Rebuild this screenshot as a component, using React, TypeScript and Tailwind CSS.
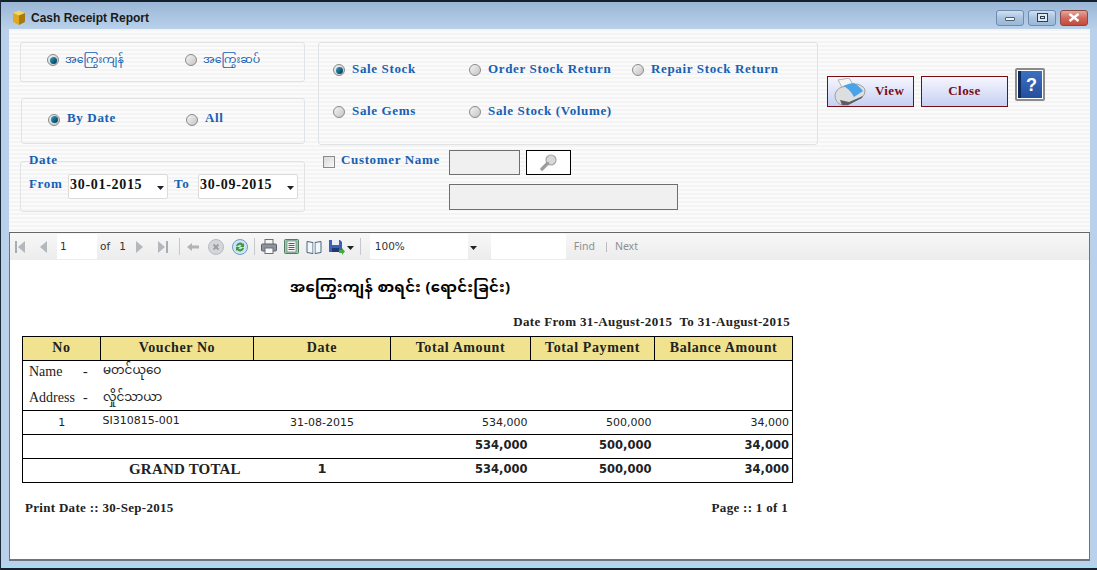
import { ReactNode } from "react";

const serif = "font-['Liberation_Serif',serif]";
const blueLabel = `${serif} font-bold text-[13px] tracking-[0.65px] text-[#1560b5] whitespace-nowrap`;
const burmese = "font-['Noto_Sans_Myanmar','Padauk','Myanmar_Text','Noto_Sans',sans-serif]";
const burmeseLabel = `${burmese} text-[11px] text-[#1560b5]`;

function Radio({ checked, label, className = "" }: { checked?: boolean; label: ReactNode; className?: string }) {
  return (
    <div className={`flex items-center gap-[7px] ${className}`}>
      <span className="flex h-3 w-3 shrink-0 items-center justify-center rounded-full border border-[#8a8a8a] bg-gradient-to-br from-[#f4f4f4] to-[#c4c4c4]">
        {checked && <span className="h-[7px] w-[7px] rounded-full bg-gradient-to-br from-[#35a3cf] to-[#04344f]" />}
      </span>
      {label}
    </div>
  );
}

function Group({ className, children }: { className: string; children: ReactNode }) {
  return <div className={`rounded-[3px] border border-[#dfe3e6] ${className}`}>{children}</div>;
}

function DatePick({ value }: { value: string }) {
  return (
    <div className="flex h-[25px] w-[100px] items-center justify-between rounded-[2px] border border-[#dcdcdc] bg-white pl-[1px] pr-[3px]">
      <span className={`${serif} pb-[3px] text-[14px] font-bold tracking-[0.7px] text-[#111]`}>{value}</span>
      <Caret />
    </div>
  );
}

function Caret({ color = "#222" }: { color?: string }) {
  return (
    <svg width="7" height="4" viewBox="0 0 7 4" className="mt-[3px] shrink-0">
      <path d="M0 0h7L3.5 4z" fill={color} />
    </svg>
  );
}

function CaptionButton({ kind }: { kind: "min" | "max" | "close" }) {
  const skin =
    kind === "close"
      ? "w-[28px] border-[#8b4a45] from-[#e3a79d] via-[#cf6a5c] to-[#c4493a]"
      : "w-[28px] border-[#6d8cae] from-[#cfe0f1] via-[#a9c3de] to-[#9ab8d8]";
  return (
    <div className={`flex h-[16px] items-center justify-center rounded-[3px] border bg-gradient-to-b ${skin}`}>
      {kind === "min" && <span className="mt-[3px] h-[4px] w-[10px] rounded-[1px] border border-[#4f5f70] bg-[#eef3f8]" />}
      {kind === "max" && (
        <span className="flex h-[9px] w-[11px] items-center justify-center border border-[#2f3f50] bg-[#dfe9f3]">
          <span className="h-[3px] w-[5px] border border-[#2f3f50]" />
        </span>
      )}
      {kind === "close" && (
        <svg width="12" height="9" viewBox="0 0 12 9">
          <path d="M1.5 1l9 7M10.5 1l-9 7" stroke="#fff" strokeWidth="2.4" />
        </svg>
      )}
    </div>
  );
}

function CubeIcon() {
  return (
    <svg width="14" height="15" viewBox="0 0 14 15">
      <path d="M1 3l6-2.5L13 3 7 5.5z" fill="#f7d65a" />
      <path d="M1 3l6 2.5V15l-5-2.5Q1 12 1 11z" fill="#e0a81c" />
      <path d="M13 3L7 5.5V15l5-2.5q1-.5 1-1.5z" fill="#a9780f" />
    </svg>
  );
}

function PrinterBig() {
  return (
    <svg width="32" height="28" viewBox="0 0 32 28">
      <path d="M4 2l11-2 5 8-11 3z" fill="#f4f4f4" stroke="#a5a5a5" strokeWidth=".8" />
      <path d="M1 17Q2 11 8 9l15-3q8 2 8 7 0 4-3 6L14 27H8Q1 25 1 17z" fill="#dcdee0" stroke="#8f8f8f" strokeWidth=".8" />
      <path d="M9 8q7-3 11-3 3 1 9 8l-9 6q-4-8-11-11z" fill="#4aa3e6" />
      <path d="M6 22l9 2 14-6-1 2-14 7H8z" fill="#5b5e62" />
    </svg>
  );
}

function HelpButton() {
  return (
    <div className="flex h-[33px] w-[30px] items-stretch rounded-[2px] border-2 border-[#8a8a8a] bg-white p-[1px]">
      <span className="w-[3px] bg-[#0e2a5c]" />
      <span className="flex flex-1 items-center justify-center bg-gradient-to-b from-[#3d6fc0] to-[#23509f] font-['Liberation_Sans',sans-serif] text-[18px] font-bold leading-none text-white">
        ?
      </span>
    </div>
  );
}

function Lens() {
  return (
    <svg width="17" height="17" viewBox="0 0 17 17">
      <circle cx="11" cy="6" r="5" fill="#d8d8d8" stroke="#a5a5a5" strokeWidth="1.2" />
      <path d="M7.5 9.5L2 15" stroke="#9d9d9d" strokeWidth="3.4" strokeLinecap="round" />
    </svg>
  );
}

function NavArrow({ dir, stop }: { dir: "left" | "right"; stop?: boolean }) {
  return (
    <svg width="11" height="14" viewBox="0 0 11 14">
      {dir === "left" ? (
        <>
          {stop && <rect x="0" y="1" width="2" height="12" fill="#a8adb3" />}
          <path d="M10 1v12L3 7z" fill="#b4b8bd" />
        </>
      ) : (
        <>
          <path d="M1 1v12l7-6z" fill="#b4b8bd" />
          {stop && <rect x="9" y="1" width="2" height="12" fill="#a8adb3" />}
        </>
      )}
    </svg>
  );
}

function ToolSep() {
  return <span className="block h-[17px] w-px shrink-0 bg-[#c4c8cc]" />;
}

function ReportToolbar() {
  return (
    <div className="flex h-[28px] items-center border-x border-t border-x-[#6c7480] border-t-[#666] bg-gradient-to-b from-[#f7f7f7] to-[#ececec] pl-[4px] font-['DejaVu_Sans',sans-serif] text-[10.5px] text-[#333]">
      <span className="ml-[1px]"><NavArrow dir="left" stop /></span>
      <span className="ml-[11px]"><NavArrow dir="left" /></span>
      <span className="ml-[9px] flex h-[25px] w-[40px] items-center bg-white pl-[3px]">1</span>
      <span className="ml-[3px]">of</span>
      <span className="ml-[9px]">1</span>
      <span className="ml-[9px]"><NavArrow dir="right" /></span>
      <span className="ml-[11px]"><NavArrow dir="right" stop /></span>
      <span className="ml-[11px]"><ToolSep /></span>
      <svg width="12" height="10" viewBox="0 0 12 10" className="ml-[7px]">
        <path d="M0 5l5-4v2.500h7v3H5V9z" fill="#b0b4b8" />
      </svg>
      <svg width="16" height="16" viewBox="0 0 16 16" className="ml-[9px]">
        <circle cx="8" cy="8" r="7.500" fill="#d4d6d9" stroke="#b8babd" />
        <path d="M5.500 5.500l5 5M10.500 5.500l-5 5" stroke="#9a9da1" strokeWidth="1.800" />
      </svg>
      <svg width="16" height="16" viewBox="0 0 16 16" className="ml-[8px]">
        <circle cx="8" cy="8" r="7.500" fill="#cfe3f5" stroke="#6d9cc6" />
        <path d="M4 7a4 4 0 0 1 7-2l1-1v4H8l1.500-1.500A2.500 2.500 0 0 0 5.500 7.500z" fill="#3f9a3a" />
        <path d="M12 9a4 4 0 0 1-7 2l-1 1V8h4L6.500 9.500a2.500 2.500 0 0 0 4-1z" fill="#3f9a3a" />
      </svg>
      <span className="ml-[6px]"><ToolSep /></span>
      <svg width="16" height="15" viewBox="0 0 16 15" className="ml-[6px]">
        <rect x="4" y="0.500" width="8" height="5" fill="#f4f4f4" stroke="#6a6f75" />
        <rect x="0.500" y="5" width="15" height="7" rx="1" fill="#8d949b" stroke="#5c6268" />
        <rect x="4" y="9" width="8" height="5.500" fill="#fafafa" stroke="#6a6f75" />
      </svg>
      <svg width="15" height="15" viewBox="0 0 15 15" className="ml-[7px]">
        <rect x="0.500" y="0.500" width="14" height="14" rx="1" fill="#9fc9a8" stroke="#4d7d63" />
        <rect x="3" y="2" width="9" height="11" fill="#f6f6f6" stroke="#5b6b78" strokeWidth=".6" />
        <path d="M4.500 4.500h6M4.500 6.500h6M4.500 8.500h6M4.500 10.500h6" stroke="#46637a" />
      </svg>
      <svg width="16" height="14" viewBox="0 0 16 14" className="ml-[7px]">
        <path d="M1 1.500l6 1v11l-6-1zM15 1.500l-6 1v11l6-1z" fill="#f3f7fb" stroke="#4d6278" />
        <path d="M7 2.500h2v11H7z" fill="#c9d6e3" />
      </svg>
      <svg width="16" height="16" viewBox="0 0 16 16" className="ml-[7px]">
        <path d="M0 1h11l2 2v10H0z" fill="#3d5fb5" />
        <rect x="3" y="1" width="7" height="5" fill="#e9eef7" />
        <rect x="3" y="9" width="7" height="4" fill="#20386f" />
        <path d="M10 11h3V9l3 3.500-3 3.500v-2h-3z" fill="#3fae3f" />
      </svg>
      <span className="ml-[2px]"><Caret /></span>
      <span className="ml-[6px]"><ToolSep /></span>
      <div className="ml-[9px] flex h-[25px] w-[98px] items-center bg-white pl-[5px]">100%</div>
      <div className="flex h-[25px] w-[12px] items-center justify-center">
        <Caret />
      </div>
      <div className="ml-[11px] h-[25px] w-[75px] bg-white" />
      <span className="ml-[8px] font-['Noto_Sans',sans-serif] text-[#8a8f94]">Find</span>
      <span className="ml-[11px] h-[10px] w-px bg-[#b9bcc0]" />
      <span className="ml-[8px] font-['Noto_Sans',sans-serif] text-[#8a8f94]">Next</span>
    </div>
  );
}

const thClass = `border-r border-black pb-[2px] font-bold text-[14px] tracking-[0.6px] ${serif} text-[#222]`;
const sans = "font-['DejaVu_Sans',sans-serif]";

function TotalsCells({ lift }: { lift?: boolean }) {
  const cell = `${lift ? "pb-[3px] leading-[16px]" : ""} pr-[3px] text-right text-[11.5px] font-bold ${sans}`;
  return (
    <>
      <td className={cell}>534,000</td>
      <td className={cell}>500,000</td>
      <td className={cell}>34,000</td>
    </>
  );
}

function ReportTable() {
  return (
    <table className="ml-[12px] mt-[4px] w-[770px] table-fixed border-collapse border border-black text-[#222]">
      <colgroup>
        <col className="w-[78px]" />
        <col className="w-[153px]" />
        <col className="w-[137px]" />
        <col className="w-[140px]" />
        <col className="w-[124px]" />
        <col className="w-[138px]" />
      </colgroup>
      <tbody>
        <tr className="h-[24px] border-b border-black bg-[#f0e28f] text-center">
          <td className={thClass}>No</td>
          <td className={thClass}>Voucher No</td>
          <td className={thClass}>Date</td>
          <td className={thClass}>Total Amount</td>
          <td className={thClass}>Total Payment</td>
          <td className={`${thClass} border-r-0`}>Balance Amount</td>
        </tr>
        <tr className="h-[50px] border-b border-black">
          <td colSpan={6} className={`${serif} pl-[6px] text-[14px]`}>
            <div className="flex h-[23px] items-center pb-[2px]">
              <span className="w-[54px]">Name</span>
              <span className="w-[20px]">-</span>
              <span className={`${burmese} text-[12px]`}>မတင်ယုဝေ</span>
            </div>
            <div className="flex h-[26px] items-center pt-[2px]">
              <span className="w-[54px]">Address</span>
              <span className="w-[20px]">-</span>
              <span className={`${burmese} text-[12px]`}>လှိုင်သာယာ</span>
            </div>
          </td>
        </tr>
        <tr className={`h-[24px] border-b border-black text-[11px] ${sans}`}>
          <td className="pt-[3px] text-center">1</td>
          <td className="pb-[1px] pl-[2px]">SI310815-001</td>
          <td className="pt-[3px] text-center">31-08-2015</td>
          <td className="pt-[3px] pr-[3px] text-right">534,000</td>
          <td className="pt-[3px] pr-[3px] text-right">500,000</td>
          <td className="pt-[3px] pr-[3px] text-right">34,000</td>
        </tr>
        <tr className="h-[24px] border-b border-black">
          <td colSpan={3} />
          <TotalsCells />
        </tr>
        <tr className="h-[24px]">
          <td colSpan={2} className={`${serif} pb-[3px] pl-[106px] text-[15px] font-bold leading-[16px] tracking-[0.2px]`}>
            GRAND TOTAL
          </td>
          <td className={`pb-[3px] text-center text-[13px] font-bold leading-[16px] ${sans}`}>1</td>
          <TotalsCells lift />
        </tr>
      </tbody>
    </table>
  );
}

export default function App() {
  return (
    <div className="flex h-[570px] w-[1097px] flex-col overflow-hidden border-l border-l-[#1b2a3a] bg-[#b9d1ea]">
      <div className="flex h-[29px] shrink-0 items-center border-t-2 border-t-[#15202b] bg-gradient-to-b from-[#9ab6d6] to-[#b9d1ea] pl-[11px] pr-[9px] pt-[4px]">
        <CubeIcon />
        <span className="ml-[5px] font-['Liberation_Sans',sans-serif] text-[12px] font-bold text-[#1a1a1a]">Cash Receipt Report</span>
        <div className="ml-auto flex gap-[4px]">
          <CaptionButton kind="min" />
          <CaptionButton kind="max" />
          <CaptionButton kind="close" />
        </div>
      </div>

      <div className="ml-[8px] flex w-[1081px] flex-col">
        <div className="flex h-[203px] bg-[repeating-linear-gradient(180deg,#f4f4f4_0px,#f4f4f4_2px,#fbfbfb_2px,#fbfbfb_4px)] pl-[11px] pt-[13px]">
          <div className="flex w-[285px] shrink-0 flex-col">
            <Group className="flex h-[40px] items-center pb-[4px] pl-[26px]">
              <Radio checked className="w-[138px]" label={<span className={`${burmeseLabel} -ml-[1px]`}>အကြွေးကျန်</span>} />
              <Radio label={<span className={`${burmeseLabel} -ml-[1px]`}>အကြွေးဆပ်</span>} />
            </Group>
            <Group className="ml-[1px] mt-[16px] flex h-[46px] items-center pb-[3px] pl-[26px]">
              <Radio checked className="w-[138px]" label={<span className={`${blueLabel} pb-[4px]`}>By Date</span>} />
              <Radio label={<span className={`${blueLabel} pb-[4px]`}>All</span>} />
            </Group>
            <Group className="relative mt-[17px] flex h-[51px] items-center pb-[1px] pl-[8px]">
              <span className={`${blueLabel} absolute left-[6px] top-[-12px] px-[2px]`}>Date</span>
              <span className={`${blueLabel} w-[39px] pb-[4px]`}>From</span>
              <DatePick value="30-01-2015" />
              <span className={`${blueLabel} w-[30px] pb-[4px] pl-[6px]`}>To</span>
              <DatePick value="30-09-2015" />
            </Group>
          </div>

          <div className="ml-[13px] flex w-[500px] shrink-0 flex-col">
            <Group className="flex h-[103px] flex-col justify-center gap-[26px] pb-[5px] pl-[14px]">
              <div className="flex h-4 items-center">
                <Radio checked className="w-[136px]" label={<span className={`${blueLabel} pb-[2px]`}>Sale Stock</span>} />
                <Radio className="w-[163px]" label={<span className={`${blueLabel} pb-[2px]`}>Order Stock Return</span>} />
                <Radio label={<span className={`${blueLabel} pb-[2px]`}>Repair Stock Return</span>} />
              </div>
              <div className="flex h-4 items-center">
                <Radio className="w-[136px]" label={<span className={`${blueLabel} pb-[2px]`}>Sale Gems</span>} />
                <Radio label={<span className={`${blueLabel} pb-[2px]`}>Sale Stock (Volume)</span>} />
              </div>
            </Group>
            <div className="mt-[5px] flex h-[25px] items-center pl-[5px]">
              <span className="mb-[2px] h-[12px] w-[12px] border border-[#8a8a8a] bg-gradient-to-br from-[#d9d9d9] to-[#f8f8f8]" />
              <span className={`${blueLabel} ml-[6px] w-[108px] pb-[5px]`}>Customer Name</span>
              <div className="h-[25px] w-[71px] border border-[#6f6f6f] bg-[#f0f0f0]" />
              <div className="ml-[6px] flex h-[25px] w-[45px] items-center justify-center border border-black bg-white">
                <Lens />
              </div>
            </div>
            <div className="ml-[131px] mt-[9px] h-[26px] w-[229px] border border-[#6f6f6f] bg-[#f0f0f0]" />
          </div>

          <div className="ml-[9px] flex items-start">
            <button className="mt-[34px] flex h-[31px] w-[87px] items-center border border-[#7a0c14] bg-gradient-to-b from-[#f6f6fd] to-[#c6d0f3] pl-[6px]">
              <PrinterBig />
              <span className={`${serif} ml-[9px] pb-[2px] text-[13px] font-bold tracking-[0.4px] text-[#7a0c14]`}>View</span>
            </button>
            <button className={`${serif} ml-[7px] mt-[34px] h-[31px] w-[87px] border border-[#7a0c14] bg-gradient-to-b from-[#f6f6fd] to-[#c6d0f3] pb-[2px] text-[13px] font-bold tracking-[0.4px] text-[#7a0c14]`}>
              Close
            </button>
            <div className="ml-[7px] mt-[26px]">
              <HelpButton />
            </div>
          </div>
        </div>

        <ReportToolbar />

        <div className="h-[301px] border-x border-b-2 border-x-[#6c7480] border-b-[#6c7480] bg-white">
          <div className={`${burmese} ml-[280px] mt-[18px] h-[22px] text-[15px] font-bold tracking-[0.35px] text-black`}>အကြွေးကျန် စာရင်း (ရောင်းခြင်း)</div>
          <div className={`${serif} mt-[12px] w-[780px] text-right text-[13px] font-bold tracking-[0.35px] text-[#222]`}>
            Date From 31-August-2015&nbsp;&nbsp;To 31-August-2015
          </div>
          <ReportTable />
          <div className={`${serif} ml-[15px] mt-[15px] flex w-[763px] justify-between text-[13px] font-bold tracking-[0.3px] text-[#222]`}>
            <span>Print Date :: 30-Sep-2015</span>
            <span>Page :: 1 of 1</span>
          </div>
        </div>
      </div>

      <div className="mt-auto h-[2px] bg-[#a5dcf0]" />
      <div className="h-[2px] bg-[#15202b]" />
    </div>
  );
}
